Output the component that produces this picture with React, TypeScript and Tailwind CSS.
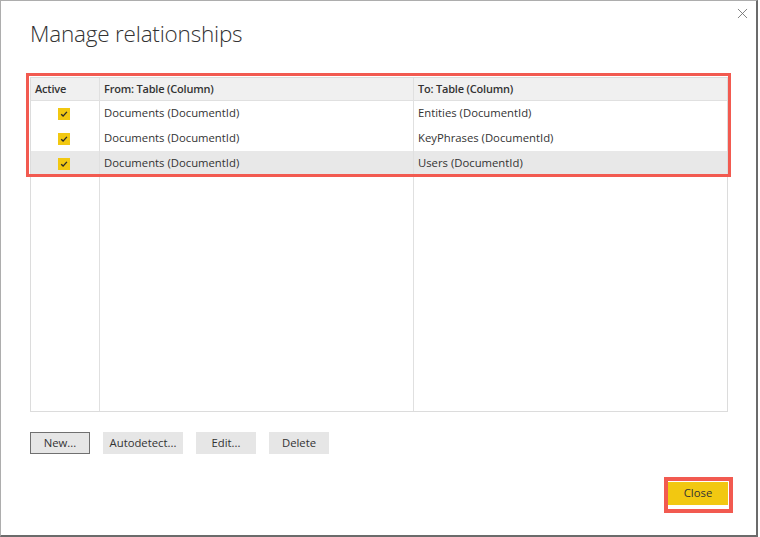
import { X } from 'lucide-react'

const rows = [
  { from: 'Documents (DocumentId)', to: 'Entities (DocumentId)', selected: false },
  { from: 'Documents (DocumentId)', to: 'KeyPhrases (DocumentId)', selected: false },
  { from: 'Documents (DocumentId)', to: 'Users (DocumentId)', selected: true },
]

const CheckBox = () => (
  <span className="flex h-[12px] w-[12px] items-center justify-center bg-[#f2c811]">
    <svg width="10" height="10" viewBox="0 0 10 10" fill="none">
      <path d="M2.2 5.2 L4.1 7.1 L7.9 2.9" stroke="#2b2b2b" strokeWidth="1.4" />
    </svg>
  </span>
)

const Column = ({ title, className, children }: { title: string; className?: string; children: React.ReactNode }) => (
  <div className={`flex flex-col ${className ?? ''}`}>
    <div className="flex h-[23px] items-center border-b border-[#e0e0e0] bg-[#f0f0f0] px-[4px] text-[11px] font-semibold tracking-[-0.2px] text-[#333]">
      {title}
    </div>
    {children}
  </div>
)

export default function App() {
  return (
    <div className="h-[537px] w-[760px] bg-white" style={{ fontFamily: '"Open Sans", "Noto Sans", sans-serif' }}>
      <div className="relative h-[537px] w-[758px] border-l border-t border-r-2 border-b-2 border-l-[#adadad] border-t-[#adadad] border-r-[#6b6b6b] border-b-[#6b6b6b] pl-[29px] pr-[28px]">
        <button className="absolute right-[5px] top-[4px] text-[#6e6e6e]">
          <X className="h-[17px] w-[17px]" strokeWidth={1.2} />
        </button>

        <h1 className="pt-[16px] text-[22.5px] leading-[34px] font-light tracking-[-0.2px] text-[#333]">Manage relationships</h1>

        {/* relationships list */}
        <div className="mt-[26px] flex h-[335px] border border-[#dcdcdc] text-[11.3px] text-[#333]">
          <Column title="Active" className="w-[69px] border-r border-[#e0e0e0]">
            {rows.map((r, i) => (
              <div key={i} className={`flex h-[25px] items-center justify-center pr-[2px] ${r.selected ? 'bg-[#e8e8e8]' : ''}`}>
                <CheckBox />
              </div>
            ))}
          </Column>
          <Column title="From: Table (Column)" className="w-[314px] border-r border-[#e0e0e0]">
            {rows.map((r, i) => (
              <div key={i} className={`flex h-[25px] items-center px-[4px] ${r.selected ? 'bg-[#e8e8e8]' : ''}`}>
                {r.from}
              </div>
            ))}
          </Column>
          <Column title="To: Table (Column)" className="flex-1">
            {rows.map((r, i) => (
              <div key={i} className={`flex h-[25px] items-center px-[4px] ${r.selected ? 'bg-[#e8e8e8]' : ''}`}>
                {r.to}
              </div>
            ))}
          </Column>
        </div>

        <div className="mt-[20px] flex gap-[13px] text-[11.3px] text-[#333]">
          <button className="h-[22px] w-[60px] border border-[#707070] bg-[#e6e6e6]">New...</button>
          <button className="h-[22px] w-[80px] bg-[#e6e6e6]">Autodetect...</button>
          <button className="h-[22px] w-[60px] bg-[#e6e6e6]">Edit...</button>
          <button className="h-[22px] w-[60px] bg-[#e6e6e6]">Delete</button>
        </div>

        <div className="mt-[28px] flex justify-end">
          <button className="h-[23px] w-[60px] bg-[#f2c811] text-[11.3px] text-[#333]">Close</button>
        </div>

        {/* annotation boxes */}
        <div className="pointer-events-none absolute left-[25px] top-[72px] h-[104px] w-[705px] border-[3px] border-[#f25a50]" />
        <div className="pointer-events-none absolute left-[663px] top-[476px] h-[36px] w-[69px] border-[4px] border-[#f25a50]" />
      </div>
    </div>
  )
}
